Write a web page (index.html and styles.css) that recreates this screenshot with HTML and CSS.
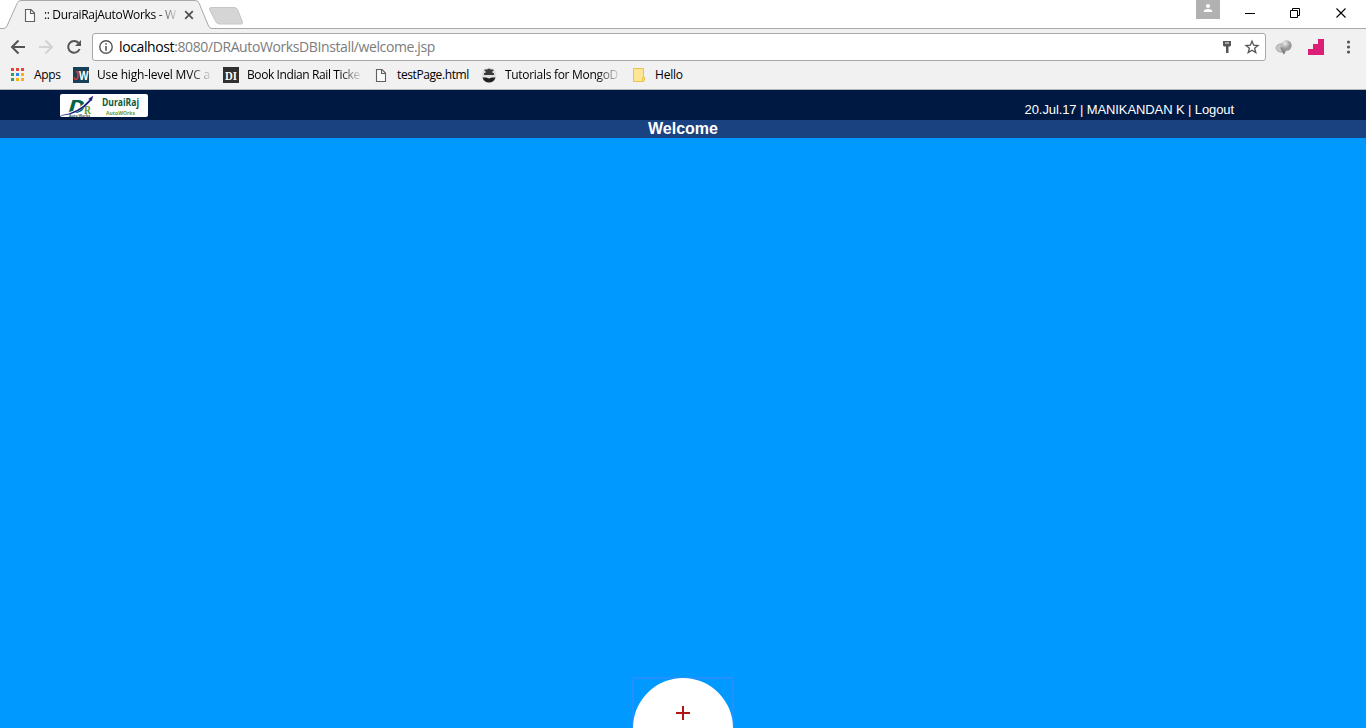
FILE: index.html
```html
<!DOCTYPE html>
<html lang="en">
<head>
<meta charset="utf-8">
<title>:: DuraiRajAutoWorks - Welcome</title>
<link rel="stylesheet" href="styles.css">
</head>
<body>
<div class="browser">
  <div class="tabstrip">
    <svg class="tab-shapes" width="250" height="29" viewBox="0 0 250 29">
      <path d="M0 28.5H3Q6 28.5 7 26L17.500 2.500Q18.500 .5 21 .5H195Q198 .5 199 3L208.500 26Q209.500 28.500 212 28.500H250V29H0Z" fill="#f1f1f1"/>
      <path d="M0 28.500H3Q6 28.500 7 26L17.500 2.500Q18.500 .5 21 .5H195Q198 .5 199 3L208.500 26Q209.500 28.500 212 28.500H250" fill="none" stroke="#a9a9a9"/>
      <path d="M211 7.500H234Q236.500 7.500 237.500 9.500L242.500 22Q243 24 241 24H219.500Q217 24 216 22L209.500 9.500Q209 7.500 211 7.500Z" fill="#d5d5d5" stroke="#c6c6c6"/>
    </svg>
    <div class="tab">
      <svg class="page-icon" width="16" height="16" viewBox="0 0 16 16"><path d="M3.500 2.500H9L12.500 6V14.500H3.500ZM8.500 2.500V6.500H12.500" fill="#fafafa" stroke="#606060" stroke-width="1.100"/></svg>
      <span class="tab-title">:: DuraiRajAutoWorks - W</span>
      <svg width="10" height="10" viewBox="0 0 10 10"><path d="M1.200 1.200L8.800 8.800M8.800 1.200L1.200 8.800" stroke="#505050" stroke-width="1.700"/></svg>
    </div>
    <div class="window-controls">
      <span class="profile"><svg width="24" height="19" viewBox="0 0 24 19"><circle cx="12" cy="6" r="2.100" fill="#fff"/><path d="M7.800 12V11Q8.500 9 12 9T16.200 11V12Z" fill="#fff"/></svg></span>
      <svg width="146" height="28" viewBox="0 0 146 28" fill="none" stroke="#000">
        <path d="M25 13.500H35M70.500 10.500H77.500V17.500H70.500ZM72.500 10V8.500H79.500V15.500H78"/>
        <path d="M116.500 8.500L125.500 17.500M125.500 8.500L116.500 17.500" stroke-width="1.100"/>
      </svg>
    </div>
  </div>

  <div class="toolbar">
    <svg class="nav" width="92" height="32" viewBox="0 0 92 32" fill="none" stroke-width="2">
      <path d="M25 18H12.500M18.500 11.500L12 18L18.500 24.500" stroke="#555"/>
      <path d="M39 18H51.500M45.500 11.500L52 18L45.500 24.500" stroke="#d3d3d3"/>
      <path d="M78.600 14A5.900 5.900 0 1 0 79.600 20" stroke="#555"/>
      <path d="M81 11V17H75Z" fill="#555"/>
    </svg>
    <div class="omnibox">
      <svg width="14" height="14" viewBox="0 0 14 14"><circle cx="7" cy="7" r="6.200" fill="none" stroke="#555" stroke-width="1.400"/><path d="M6.200 3.200H7.800V4.800H6.200ZM6.200 6H7.800V10.800H6.200Z" fill="#555"/></svg>
      <span class="url"><b>localhost</b>:8080/DRAutoWorksDBInstall/welcome.jsp</span>
      <svg width="43" height="26" viewBox="0 0 43 26">
        <path d="M1 7H9V11.500L8 12.500H6.500V19H4V12.500H2L1 11.500Z" fill="#555"/><path d="M3 9H7" stroke="#fff"/>
        <path d="M30 7.200L31.700 11.200L36 11.500L32.600 14.300L33.800 18.500L30 16.200L26.200 18.500L27.400 14.300L24 11.500L28.300 11.200Z" fill="none" stroke="#555" stroke-width="1.300"/>
      </svg>
    </div>
    <svg class="extensions" width="100" height="32" viewBox="0 0 100 32">
      <defs><radialGradient id="ball" cx=".35" cy=".3"><stop offset="0" stop-color="#eee"/><stop offset="1" stop-color="#999"/></radialGradient></defs>
      <ellipse cx="15.500" cy="19" rx="5.500" ry="4.200" fill="#c5c5c5" stroke="#aaa"/>
      <path d="M14 18L17.500 25.500Q19 25 20 21Z" fill="#858585"/>
      <circle cx="20.500" cy="16.500" r="5.200" fill="url(#ball)"/>
      <path d="M42 26V20H47V15H52V10H58V26Z" fill="#db1f77"/>
      <g fill="#555"><circle cx="82.500" cy="13" r="1.600"/><circle cx="82.500" cy="18" r="1.600"/><circle cx="82.500" cy="23" r="1.600"/></g>
    </svg>
  </div>

  <div class="bookmarks">
    <div class="bookmark apps">
      <svg width="16" height="16" viewBox="0 0 16 16"><path d="M1 1h3v3H1zM6 1h3v3H6zM11 1h3v3h-3z" fill="#ea4335"/><path d="M1 6h3v3H1zM1 11h3v3H1z" fill="#34a053"/><path d="M6 6h3v3H6z" fill="#2e86f5"/><path d="M11 6h3v3h-3zM6 11h3v3H6zM11 11h3v3h-3z" fill="#f9b20d"/></svg>
      <span class="t-apps">Apps</span>
    </div>
    <div class="bookmark wide">
      <svg class="fav" width="16" height="16" viewBox="0 0 16 16"><rect width="16" height="16" fill="#173f56"/><text x="0" y="13" class="jw" fill="#d33a2c" textLength="6" lengthAdjust="spacingAndGlyphs">J</text><text x="6" y="13" class="jw" fill="#fff" textLength="9.500" lengthAdjust="spacingAndGlyphs">W</text></svg>
      <span class="label fade t-mvc">Use high-level MVC a</span>
    </div>
    <div class="bookmark wide">
      <svg class="fav" width="16" height="16" viewBox="0 0 16 16"><rect width="16" height="16" fill="#303030"/><text x="2" y="12.500" class="di" fill="#fff" textLength="12" lengthAdjust="spacingAndGlyphs">DI</text></svg>
      <span class="label fade t-rail">Book Indian Rail Ticke</span>
    </div>
    <div class="bookmark page">
      <svg width="16" height="16" viewBox="0 0 16 16"><path d="M3.500 2.500H9L12.500 6V14.500H3.500ZM8.500 2.500V6.500H12.500" fill="#fafafa" stroke="#606060" stroke-width="1.100"/></svg>
      <span class="t-page">testPage.html</span>
    </div>
    <div class="bookmark wide">
      <svg width="16" height="16" viewBox="0 0 16 16"><circle cx="8" cy="8" r="7.500" fill="#e0e0e0"/><path d="M3.500 2.500H6L8 1.500L10 2.500H12.500V4H11.500V6H13V8H3V6H4.500V4H3.500Z" fill="#3a3a3a"/><path d="M1.500 10.500H5L8 11.500L11 10.500H14.500Q13 15.500 8 15.500T1.500 10.500Z" fill="#222"/></svg>
      <span class="label fade t-mongo">Tutorials for MongoD</span>
    </div>
    <div class="bookmark">
      <svg width="16" height="16" viewBox="0 0 16 16"><path d="M2.500 1.500H12.500V14.500H2.500Z" fill="#ffe694" stroke="#e9c34e"/><path d="M11.500 10.500H13.500V13.500L12.500 14.500H11.500Z" fill="#ffe694" stroke="#e9c34e"/></svg>
      <span class="t-hello">Hello</span>
    </div>
  </div>
</div>

<header class="site-header">
  <div class="logo">
    <svg width="88" height="23" viewBox="0 0 88 23">
      <text x="8" y="18.500" class="logo-d" textLength="17" lengthAdjust="spacingAndGlyphs">D</text>
      <text x="24" y="19.500" class="logo-r" textLength="7" lengthAdjust="spacingAndGlyphs">R</text>
      <path d="M8 20Q20 17 29.500 6" fill="none" stroke="#fff" stroke-width="3"/>
      <path d="M1 21.500Q18 19 30 5.500L28.500 5L33 2L31.500 7L31 6.500Q19 20.500 1 21.500Z" fill="#14147e" stroke="#14147e" stroke-width=".3"/>
      <text x="9" y="22.500" class="logo-tag" textLength="21" lengthAdjust="spacingAndGlyphs">Auto Works</text>
      <text x="42" y="12" class="logo-name" textLength="37" lengthAdjust="spacingAndGlyphs">DuraiRaj</text>
      <text x="46" y="20.500" class="logo-sub" textLength="29" lengthAdjust="spacingAndGlyphs">AutoWOrks</text>
    </svg>
  </div>
  <div class="account">20.Jul.17 | MANIKANDAN K | Logout</div>
</header>
<h1 class="page-title">Welcome</h1>
<main class="stage">
  <div class="add-frame"><div class="add-button"><svg width="14" height="14" viewBox="0 0 14 14"><path d="M0 7H14M7 0V14" stroke="#b01818" stroke-width="2"/></svg></div></div>
</main>
</body>
</html>
```
FILE: styles.css
```css
* { box-sizing: border-box; }
body {
  margin: 0;
  height: 728px;
  display: flex;
  flex-direction: column;
  overflow: hidden;
  background: #0099ff;
  font-family: "Liberation Sans", Arial, sans-serif;
}
svg { display: block; flex: none; }

.browser {
  flex: none;
  height: 90px;
  background: #f1f1f1;
  border-bottom: 1px solid #b4b6b6;
  font: 12px/16px "Open Sans", "Noto Sans", sans-serif;
  color: #000;
  white-space: nowrap;
}
.tabstrip {
  position: relative;
  height: 29px;
  display: flex;
  justify-content: space-between;
  background: #fff;
  border-bottom: 1px solid #a9a9a9;
}
.tab-shapes { position: absolute; left: 0; top: 0; }
.tab {
  position: relative;
  display: flex;
  align-items: center;
  width: 200px;
  height: 29px;
  padding-left: 22px;
}
.tab-title {
  width: 134px;
  margin: 0 6px;
  overflow: hidden;
  letter-spacing: -0.35px;
  -webkit-mask-image: linear-gradient(90deg, #000 112px, transparent 136px);
  mask-image: linear-gradient(90deg, #000 112px, transparent 136px);
}
.window-controls { display: flex; }
.profile { height: 19px; background: #b1b1b1; }

.toolbar { display: flex; height: 32px; }
.omnibox {
  display: flex;
  align-items: center;
  width: 1174px;
  height: 28px;
  margin-top: 4px;
  padding-left: 6px;
  background: #fff;
  border: 1px solid #a8a8a8;
  border-radius: 3px;
}
.url {
  flex: 1;
  margin-left: 6px;
  font-size: 14px;
  letter-spacing: -0.39px;
  color: #7c7c7c;
}
.url b { font-weight: 400; color: #000; }

.bookmarks {
  display: flex;
  align-items: center;
  height: 28px;
  padding-left: 10px;
}
.bookmark { display: flex; align-items: center; gap: 8px; }
.apps { width: 63px; }
.wide { width: 150px; }
.page { width: 108px; }
.label { width: 114px; overflow: hidden; }
.fade {
  -webkit-mask-image: linear-gradient(90deg, #000 92px, transparent 116px);
  mask-image: linear-gradient(90deg, #000 92px, transparent 116px);
}
.t-apps { letter-spacing: -0.3px; }
.t-mvc { letter-spacing: -0.17px; }
.t-rail, .t-page { letter-spacing: -0.4px; }
.t-mongo { letter-spacing: -0.3px; }
.t-hello { letter-spacing: -0.2px; }
.jw { font: bold 13px "Liberation Sans", sans-serif; }
.di { font: bold 13px "Liberation Serif", serif; }

.site-header {
  flex: none;
  display: flex;
  justify-content: space-between;
  height: 30px;
  padding: 4px 132px 0 60px;
  background: #001942;
}
.logo { width: 88px; height: 23px; background: #fff; border-radius: 2px; overflow: hidden; }
.logo-d { font: italic bold 17.5px "Open Sans", sans-serif; fill: #006448; }
.logo-r { font: bold 13px "Liberation Serif", serif; fill: #64962a; }
.logo-tag { font: bold 4px "Open Sans", sans-serif; fill: #27606a; }
.logo-name { font: bold 10px "Open Sans", sans-serif; fill: #075a42; }
.logo-sub { font: bold 6px "Open Sans", sans-serif; fill: #6b972c; }
.account { padding-top: 8px; font-size: 13px; line-height: 16px; letter-spacing: -0.1px; color: #fff; white-space: nowrap; }
.page-title {
  flex: none;
  height: 18px;
  margin: 0;
  background: #1a4180;
  color: #fff;
  font-size: 16px;
  line-height: 18px;
  text-align: center;
}
.stage { flex: 1; display: flex; justify-content: center; align-items: flex-end; overflow: hidden; }
.add-frame { width: 102px; height: 51px; border: 2px solid #2490ff; border-bottom: 0; border-radius: 3px 3px 0 0; }
.add-button {
  display: flex;
  justify-content: center;
  width: 100px;
  height: 100px;
  margin: -1px;
  padding-top: 28px;
  border-radius: 50%;
  background: #fff;
}
```
